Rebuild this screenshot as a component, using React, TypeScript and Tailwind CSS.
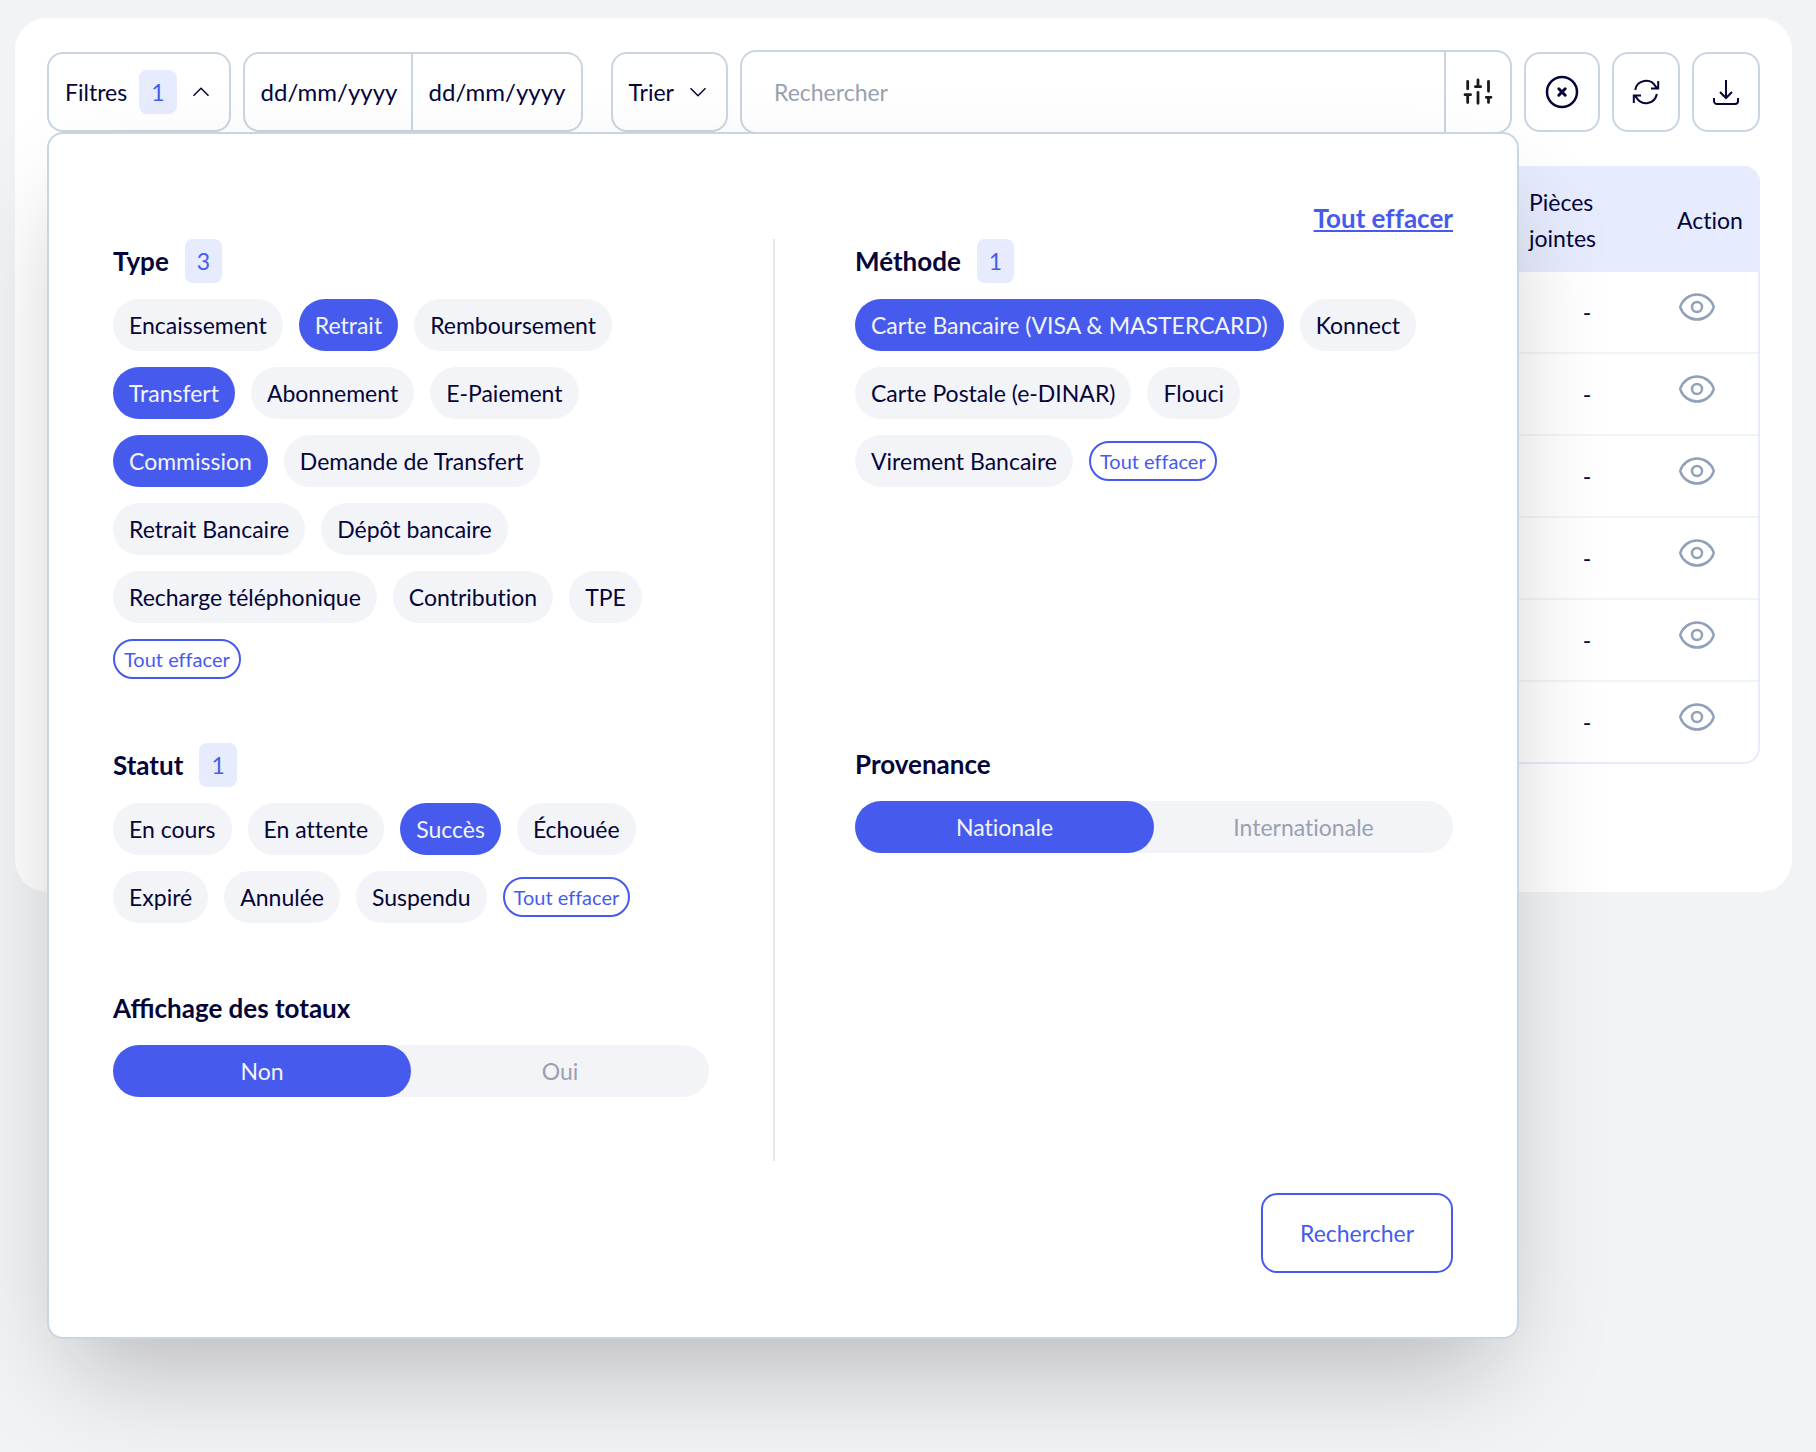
import React from "react";

const BORDER = "border-2 border-slate-300";

function Icon({ d, size, box = "0 0 24 24", width = 1.5 }: { d: string[]; size: string; box?: string; width?: number }) {
  return (
    <svg
      viewBox={box}
      fill="none"
      stroke="currentColor"
      strokeWidth={width}
      className={`${size} shrink-0`}
      aria-hidden="true"
    >
      {d.map((p) => (
        <path key={p} d={p} />
      ))}
    </svg>
  );
}

const CHEVRON_UP = ["m4.5 15.75 7.5-7.5 7.5 7.5"];
const CHEVRON_DOWN = ["m19.5 8.25-7.5 7.5-7.5-7.5"];
const REFRESH = [
  "M5.2 14A11 11 0 0 1 25.6 10.5L27.6 12.5M28.2 5V12.6H21",
  "M26.8 18A11 11 0 0 1 6.4 21.5L4.4 19.5M3.8 27V19.4H11",
];
const DOWNLOAD = [
  "M3 16.5v2.25A2.25 2.25 0 0 0 5.25 21h13.5A2.25 2.25 0 0 0 21 18.75V16.5M16.5 12 12 16.5L7.5 12M12 16.5V3",
];
const EYE = [
  "M2.036 12.322a1.012 1.012 0 0 1 0-.639C3.423 7.51 7.36 4.5 12 4.5c4.638 0 8.573 3.007 9.963 7.178.07.207.07.431 0 .639C20.577 16.49 16.64 19.5 12 19.5c-4.638 0-8.573-3.007-9.963-7.178Z",
  "M15 12a3 3 0 1 1-6 0 3 3 0 0 1 6 0Z",
];

function Badge({ children }: { children: React.ReactNode }) {
  return (
    <span className="flex h-11 items-center rounded-lg bg-[#e6ecfd] px-3 text-[#465bee]">
      {children}
    </span>
  );
}

function Heading({ children, count }: { children: React.ReactNode; count?: number }) {
  return (
    <div className="mb-4 flex items-center gap-4">
      <h3 className="text-[26px] leading-[42px] font-bold [font-variant-ligatures:normal]">{children}</h3>
      {count !== undefined && <Badge>{count}</Badge>}
    </div>
  );
}

function ChipGroup({ title, count, items, active }: { title: string; count: number; items: string[]; active: string[] }) {
  return (
    <section>
      <Heading count={count}>{title}</Heading>
      <div className="flex flex-wrap items-center gap-4">
        {items.map((item) => {
          const on = active.includes(item);
          return (
            <button
              key={item}
              type="button"
              aria-pressed={on}
              className={`h-13 rounded-full px-4 ${on ? "bg-[#465bee] text-[#f3f4f8]" : "bg-[#f3f4f8]"}`}
            >
              {item}
            </button>
          );
        })}
        <button type="button" className="h-10 rounded-full border-2 border-[#465bee] px-[9px] text-xl text-[#465bee]">
          Tout effacer
        </button>
      </div>
    </section>
  );
}

function Toggle({ title, options }: { title: string; options: [string, string] }) {
  return (
    <section>
      <Heading>{title}</Heading>
      <div className="grid h-13 grid-cols-2 rounded-full bg-[#f3f4f8]">
        <button type="button" aria-pressed="true" className="rounded-full bg-[#465bee] text-[#f3f4f8]">
          {options[0]}
        </button>
        <button type="button" aria-pressed="false" className="rounded-full text-gray-400">
          {options[1]}
        </button>
      </div>
    </section>
  );
}

const TYPES = [
  "Encaissement",
  "Retrait",
  "Remboursement",
  "Transfert",
  "Abonnement",
  "E-Paiement",
  "Commission",
  "Demande de Transfert",
  "Retrait Bancaire",
  "Dépôt bancaire",
  "Recharge téléphonique",
  "Contribution",
  "TPE",
];
const METHODS = [
  "Carte Bancaire (VISA & MASTERCARD)",
  "Konnect",
  "Carte Postale (e-DINAR)",
  "Flouci",
  "Virement Bancaire",
];
const STATUSES = ["En cours", "En attente", "Succès", "Échouée", "Expiré", "Annulée", "Suspendu"];

function FilterPanel() {
  return (
    <div
      className={`absolute top-[82px] right-[241px] left-0 z-10 rounded-2xl bg-white p-16 shadow-[0_50px_100px_-24px_rgba(0,0,0,0.25)] ${BORDER}`}
    >
      <div className="flex justify-end">
        <button type="button" className="text-[26px] leading-[41px] font-bold text-[#465bee] underline">
          Tout effacer
        </button>
      </div>
      <div className="grid grid-cols-[minmax(0,298fr)_146px_minmax(0,299fr)] gap-y-16">
        <ChipGroup title="Type" count={3} items={TYPES} active={["Retrait", "Transfert", "Commission"]} />
        <div className="row-span-3 -mb-16 ml-16 w-0.5 bg-gray-200" />
        <ChipGroup title="Méthode" count={1} items={METHODS} active={[METHODS[0]]} />
        <ChipGroup title="Statut" count={1} items={STATUSES} active={["Succès"]} />
        <Toggle title="Provenance" options={["Nationale", "Internationale"]} />
        <Toggle title="Affichage des totaux" options={["Non", "Oui"]} />
      </div>
      <div className="mt-24 flex justify-end">
        <button type="button" className="h-20 rounded-2xl border-2 border-[#465bee] px-[37px] text-[#465bee]">
          Rechercher
        </button>
      </div>
    </div>
  );
}

function Toolbar() {
  return (
    <div className="relative flex items-center gap-3">
      <button type="button" className={`flex h-20 items-center gap-3 rounded-2xl px-4 ${BORDER}`}>
        Filtres
        <Badge>1</Badge>
        <Icon d={CHEVRON_UP} size="size-6" />
      </button>
      <div className={`mr-4 flex h-20 w-[340px] rounded-2xl text-2xl ${BORDER}`}>
        <input
          aria-label="Date de début"
          placeholder="dd/mm/yyyy"
          className="w-1/2 min-w-0 border-r-2 border-slate-300 pl-4 outline-none placeholder:text-[#05053a]"
        />
        <input
          aria-label="Date de fin"
          placeholder="dd/mm/yyyy"
          className="w-1/2 min-w-0 pl-4 outline-none placeholder:text-[#05053a]"
        />
      </div>
      <button type="button" className={`flex h-20 items-center gap-3 rounded-2xl px-4 ${BORDER}`}>
        Trier
        <Icon d={CHEVRON_DOWN} size="size-6" />
      </button>
      <div className={`flex h-21 min-w-0 flex-1 rounded-2xl ${BORDER}`}>
        <input
          aria-label="Rechercher"
          placeholder="Rechercher"
          className="min-w-0 flex-1 px-8 outline-none placeholder:text-gray-400"
        />
        <button
          type="button"
          aria-label="Options de recherche"
          className="flex w-[66px] items-center justify-center border-l-2 border-slate-300 text-[#1a1a1a]"
        >
          <svg viewBox="0 0 32 32" fill="none" stroke="currentColor" strokeWidth="2.8" strokeLinecap="round" className="size-8" aria-hidden="true">
            <path d="M5.7 5.3V12.8M5.7 19V26.6M3 18.7H8.6M16 4V10.5M13.4 10.7H18.6M16 16.5V27.3M26.5 5.3V15.3M26.5 21.5V26.4M24.3 21.3H29" />
          </svg>
        </button>
      </div>
      <button type="button" aria-label="Réinitialiser" className={`flex h-20 w-19 items-center justify-center rounded-2xl ${BORDER}`}>
        <svg viewBox="0 0 36 36" fill="none" stroke="currentColor" strokeLinecap="round" className="size-9" aria-hidden="true">
          <circle cx="18" cy="18" r="15" strokeWidth="2.5" />
          <path d="m14.8 14.8 6.4 6.4M21.2 14.8l-6.4 6.4" strokeWidth="3" />
        </svg>
      </button>
      <button type="button" aria-label="Actualiser" className={`flex h-20 w-17 items-center justify-center rounded-2xl ${BORDER}`}>
        <Icon d={REFRESH} size="size-8" box="0 0 32 32" width={2} />
      </button>
      <button type="button" aria-label="Télécharger" className={`flex h-20 w-17 items-center justify-center rounded-2xl ${BORDER}`}>
        <Icon d={DOWNLOAD} size="size-8" />
      </button>
      <FilterPanel />
    </div>
  );
}

function ResultsTable() {
  return (
    <div className="mt-8 overflow-hidden rounded-2xl border-2 border-[#e6ecfd]">
      <table className="w-full table-fixed">
        <colgroup>
          <col />
          <col className="w-[148px]" />
          <col className="w-[97px]" />
        </colgroup>
        <thead>
          <tr className="h-[104px] bg-[#e6ecfd] text-left">
            <td />
            <th scope="col" className="px-4 leading-9 font-normal">
              Pièces jointes
            </th>
            <th scope="col" className="pl-4 font-normal">
              Action
            </th>
          </tr>
        </thead>
        <tbody>
          {[1, 2, 3, 4, 5, 6].map((row) => (
            <tr key={row} className="border-b-2 border-slate-100 last:border-b-0">
              <td />
              <td className="text-center">-</td>
              <td className="pt-[15px] pb-[25px] pl-4">
                <button type="button" aria-label="Voir le détail" className="block text-slate-400">
                  <Icon d={EYE} size="size-10" />
                </button>
              </td>
            </tr>
          ))}
        </tbody>
      </table>
    </div>
  );
}

export default function App() {
  return (
    <div className="min-h-screen overflow-hidden bg-[#f2f3f5] pt-[18px] pr-6 pl-[15px] font-['Lato','Noto_Sans',sans-serif] text-[23px] leading-8 text-[#05053a] [font-variant-ligatures:none]">
      <main className="rounded-[32px] bg-white px-8 pt-8 pb-32">
        <Toolbar />
        <ResultsTable />
      </main>
    </div>
  );
}
